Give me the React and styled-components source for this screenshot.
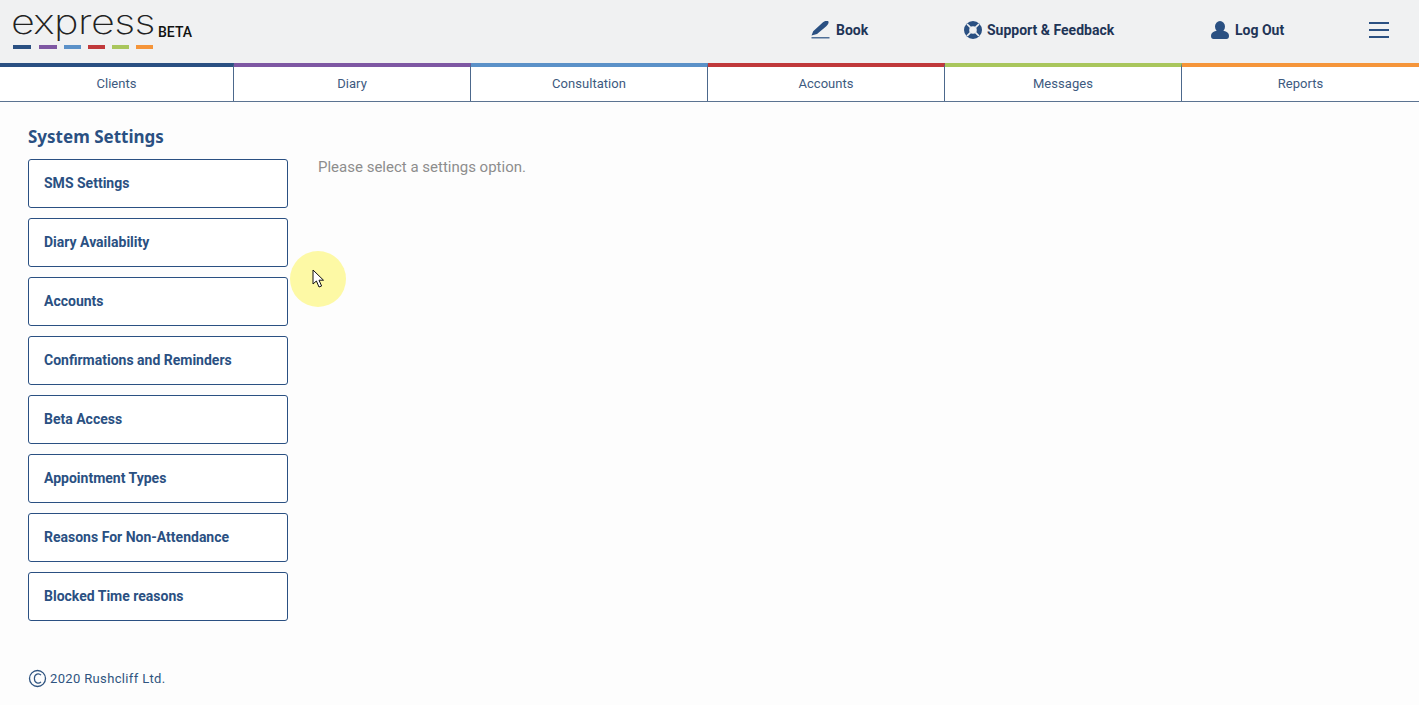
import React from "react";
import styled, { createGlobalStyle } from "styled-components";

const Global = createGlobalStyle`
  html, body { margin: 0; padding: 0; background: #fdfdfd; height: 100%; }
  body { font-family: Roboto, "Liberation Sans", sans-serif; overflow: hidden; }
`;
const Page = styled.div`position: relative; width: 1419px; height: 705px; display: flex; flex-direction: column;`;
const Header = styled.header`
  height: 63px; background: #f0f1f2; display: flex; align-items: flex-start; box-sizing: border-box;
  padding: 0 28px 0 13px;
`;
const LogoBlock = styled.div`display: flex; flex-direction: column; width: 180px; padding-top: 5px;`;
const LogoRow = styled.div`display: flex; align-items: flex-end; height: 37px;`;
const Wordmark = styled.span`
  font-family: Inter, sans-serif; font-weight: 200; font-size: 34px; line-height: 37px; letter-spacing: -.5px; color: #222; width: 145px; white-space: nowrap;
  display: inline-block; margin: 0 2px 2px -2px; transform: scaleX(1.22); transform-origin: 0 50%;
`;
const Beta = styled.span`font-size: 14px; font-weight: 500; color: #111; line-height: 16px; margin-bottom: 2px;`;
const Dashes = styled.div`display: flex; margin-top: 3px; height: 4px;`;
const Dash = styled.i`display: block; height: 4px; width: ${p => p.$w}px; margin-right: ${p => p.$m}px; background: ${p => p.$c};`;
const Actions = styled.nav`display: flex; align-items: center; height: 60px; flex: 1;`;
const Action = styled.a`
  display: flex; align-items: center; gap: ${p => p.$gap}px; font-size: 14px; font-weight: 700; color: #1f3557; position: absolute; top: 20px; left: ${p => p.$x}px; height: 20px;
`;
const Burger = styled.button`
  position: absolute; left: 1369px; top: 22px; width: 20px; height: 16px; padding: 0; border: 0; background: none;
  display: flex; flex-direction: column; justify-content: space-between;
  span { display: block; height: 2px; background: #2a5082; }
`;
const Tabs = styled.div`display: grid; grid-template-columns: 234px 237px 237px 237px 237px 1fr; height: 38px; border-bottom: 1px solid #5b7391; background: #fff;`;
const Tab = styled.a`
  box-sizing: border-box; padding-bottom: 2px;
  border-top: 4px solid ${p => p.$c}; border-right: ${p => p.$last ? "0" : "1px solid #4c688c"};
  display: flex; align-items: center; justify-content: center; font-size: 13px; color: #3d5a80; letter-spacing: .05px;
`;
const Main = styled.main`display: flex; flex: 1; padding: 0 28px; background: #fdfdfd;`;
const Sidebar = styled.aside`width: 260px; margin-right: 30px; display: flex; flex-direction: column;`;
const Title = styled.h1`
  font-family: "Noto Sans", sans-serif; font-size: 17px; line-height: 22px; font-weight: 700; color: #2a5082; margin: 24px 0 11px; white-space: nowrap;
`;
const Option = styled.button`
  box-sizing: border-box; width: 260px; height: 49px; margin-bottom: 10px; background: #fff; border: 1px solid #2a5082; border-radius: 3px;
  padding: 0 15px 1px; text-align: left; font-family: Roboto, sans-serif; font-size: 14px; font-weight: 700; color: #2a5082;
`;
const Hint = styled.p`margin: 56px 0 0; font-size: 15px; line-height: 18px; color: #8d8d8d;`;
const Footer = styled.footer`
  display: flex; align-items: center; gap: 3px; margin-top: 38px; font-size: 13px; color: #2f5480; letter-spacing: .35px;
`;
const Highlight = styled.div`
  position: absolute; left: 290px; top: 251px; width: 56px; height: 56px; border-radius: 50%; background: #fdf9a5;
`;
const Cursor = styled.svg`position: absolute; left: 22px; top: 18px;`;

const dashes = [["#2a5082",18,8],["#7e57a3",18,7],["#5b91c8",17,7],["#c0393b",17,7],["#a9c65c",17,7],["#f5953a",17,0]];
const tabs = [["Clients","#2a5082"],["Diary","#7e57a3"],["Consultation","#5b91c8"],["Accounts","#c0393b"],["Messages","#a9c65c"],["Reports","#f5953a"]];
const options = ["SMS Settings","Diary Availability","Accounts","Confirmations and Reminders","Beta Access","Appointment Types","Reasons For Non-Attendance","Blocked Time reasons"];

const Pen = () => (
  <svg width="20" height="18" viewBox="0 0 20 18">
    <path d="M0.5 14.6 L2.2 10.2 L12 1.2 C14 -0.4 15.5 -0.2 17.2 0 L17.6 1.6 C17.4 3.2 16.4 4.2 15 5.6 L6 13 Z" fill="#2a5082" />
    <rect x="0.5" y="16.2" width="18" height="1.2" fill="#2a5082" />
  </svg>
);
const Ring = () => (
  <svg width="18" height="18" viewBox="0 0 18 18">
    <circle cx="9" cy="9" r="9" fill="#2a5082" />
    <path d="M3 3 L6.4 6.4 M15 3 L11.6 6.4 M3 15 L6.4 11.6 M15 15 L11.6 11.6" stroke="#f0f1f2" strokeWidth="1.7" />
    <circle cx="9" cy="9" r="3.8" fill="#f0f1f2" />
  </svg>
);
const User = () => (
  <svg width="18" height="18" viewBox="0 0 18 18">
    <ellipse cx="9" cy="5.6" rx="5" ry="5.6" fill="#2a5082" />
    <path d="M0 15 C0 11.5 3 10.5 6 9.5 H12 C15 10.5 18 11.5 18 15 C18 17 17 18 15.5 18 H2.5 C1 18 0 17 0 15 Z" fill="#2a5082" />
  </svg>
);

export default function App() {
  return (
    <Page>
      <Global />
      <Header>
        <LogoBlock>
          <LogoRow><Wordmark>express</Wordmark><Beta>BETA</Beta></LogoRow>
          <Dashes>{dashes.map(([c,w,m]) => <Dash key={c} $c={c} $w={w} $m={m} />)}</Dashes>
        </LogoBlock>
        <Actions>
          <Action $x={811} $gap={5}><Pen />Book</Action>
          <Action $x={964} $gap={5}><Ring />Support &amp; Feedback</Action>
          <Action $x={1211} $gap={6}><User />Log Out</Action>
          <Burger aria-label="Menu"><span /><span /><span /></Burger>
        </Actions>
      </Header>
      <Tabs>
        {tabs.map(([t,c],i) => <Tab key={t} $c={c} $last={i===5}>{t}</Tab>)}
      </Tabs>
      <Main>
        <Sidebar>
          <Title>System Settings</Title>
          {options.map(o => <Option key={o}>{o}</Option>)}
          <Footer>
            <svg width="19" height="19" viewBox="0 0 19 19">
              <circle cx="9.5" cy="9.5" r="8" fill="none" stroke="#2f5480" strokeWidth="1.3" />
              <path d="M13 6.2 C11 3.9 6.4 4.4 6.4 9.5 C6.4 14.6 11 15.1 13 12.8" fill="none" stroke="#2f5480" strokeWidth="1.2" />
            </svg>
            2020 Rushcliff Ltd.
          </Footer>
        </Sidebar>
        <Hint>Please select a settings option.</Hint>
      </Main>
      <Highlight>
        <Cursor width="14" height="20" viewBox="0 0 14 20">
          <path d="M1 1 V15 L4.4 12 L7 18 L9.6 17 L7 11.2 H11.5 Z" fill="#fff" stroke="#111" strokeWidth="1" />
        </Cursor>
      </Highlight>
    </Page>
  );
}
